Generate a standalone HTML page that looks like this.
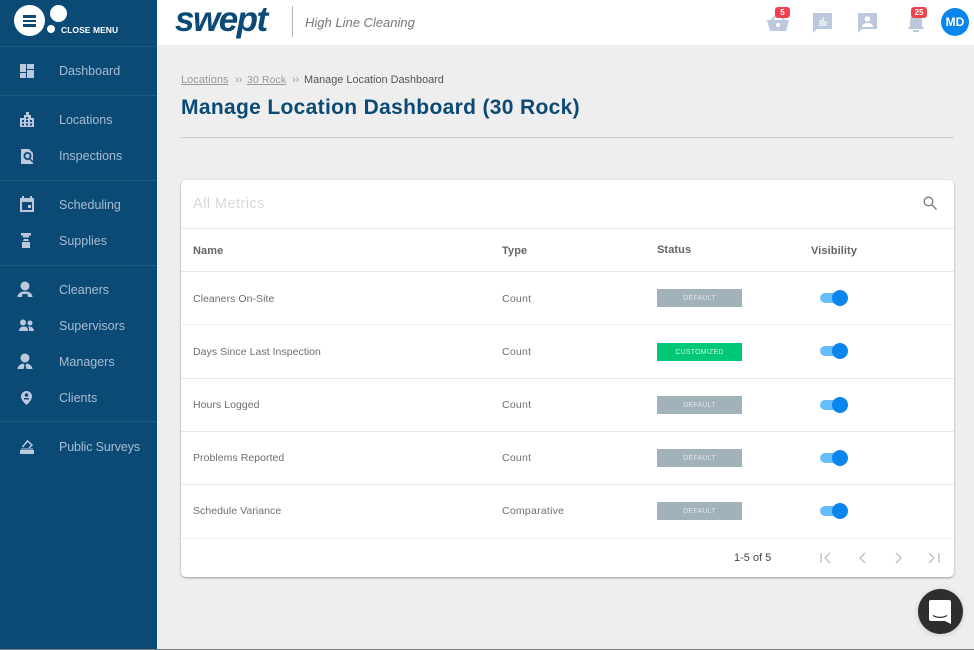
<!DOCTYPE html>
<html><head><meta charset="utf-8"><style>
html,body{margin:0;padding:0;width:974px;height:650px;overflow:hidden;background:#eee;font-family:"Liberation Sans",sans-serif}
.t{position:absolute;white-space:nowrap;line-height:16px}
.box{position:absolute}
.nav{color:#a9bdd2;font-size:12.5px;left:59px;letter-spacing:0}
.hr{position:absolute;left:0;width:157px;height:1px;background:#23597f}
.ln{position:absolute;left:181px;width:773px;height:1px;background:#e6e6e6}
.th{color:#666;font-size:11px;font-weight:bold;letter-spacing:.1px}
.td{color:#6e6e6e;font-size:10.5px;letter-spacing:.05px}
.ty{letter-spacing:.25px}
.tag{position:absolute;left:657px;width:85px;height:18px;background:#a2b2ba;color:#dfe5e8;font-size:7px;line-height:19.500px;text-align:center;letter-spacing:.2px}
.sw{position:absolute;left:820px;width:22px;height:10px;border-radius:5px;background:#66bdfb}
.kn{position:absolute;left:832px;width:16px;height:16px;border-radius:50%;background:#0a85ec}
svg{position:absolute;overflow:visible}
</style></head><body>
<div class="box" style="left:157px;top:0;width:817px;height:45px;background:#fff"></div>
<div class="box" style="left:0;top:0;width:157px;height:650px;background:#0a4a75"></div>
<div class="box" style="left:14px;top:5px;width:31px;height:31px;border-radius:50%;background:#fff"></div>
<div class="box" style="left:23px;top:15px;width:13px;height:3px;background:#0a4a75"></div>
<div class="box" style="left:23px;top:20px;width:13px;height:2px;background:#0a4a75"></div>
<div class="box" style="left:23px;top:24px;width:13px;height:3px;background:#0a4a75"></div>
<div class="box" style="left:50px;top:5px;width:17px;height:17px;border-radius:50%;background:#fff"></div>
<div class="box" style="left:47px;top:25px;width:8px;height:8px;border-radius:50%;background:#fff"></div>
<div class="t" style="left:61px;top:22px;color:#fff;font-size:8.500px;font-weight:bold;letter-spacing:.05px">CLOSE MENU</div>
<div class="hr" style="top:46px"></div><div class="hr" style="top:95px"></div><div class="hr" style="top:180px"></div><div class="hr" style="top:265px"></div><div class="hr" style="top:421px"></div>
<div class="t nav" style="top:63px">Dashboard</div>
<div class="t nav" style="top:112px">Locations</div>
<div class="t nav" style="top:148px">Inspections</div>
<div class="t nav" style="top:197px">Scheduling</div>
<div class="t nav" style="top:233px">Supplies</div>
<div class="t nav" style="top:282px">Cleaners</div>
<div class="t nav" style="top:318px">Supervisors</div>
<div class="t nav" style="top:354px">Managers</div>
<div class="t nav" style="top:390px">Clients</div>
<div class="t nav" style="top:439px;letter-spacing:-.12px">Public Surveys</div>
<svg width="157" height="470" style="left:0;top:0" fill="#bcc8dc">
<path d="M20 64h6v8h-6zM20 73h6v5h-6zM27 64h7v5h-7zM27 70h7v8h-7z"/>
<path d="M20 118h4v-3h2v-3h3v3h2v3h3v9H20z"/><path d="M22 120h2v2h-2zM26 120h2v2h-2zM30 120h2v2h-2zM22 123.500h2v2h-2zM26 123.500h2v2h-2zM30 123.500h2v2h-2zM26 117h2v2h-2z" fill="#0a4a75"/>
<path d="M21 149h8l4 4v11H21z"/><circle cx="27.500" cy="156" r="4" fill="#0a4a75"/><circle cx="27.500" cy="156" r="2.200"/><path d="M30 159l3 3" stroke="#0a4a75" stroke-width="1.500"/>
<path d="M20 198h14v14H20zM22 202v8h10v-8z" fill-rule="evenodd"/><rect x="22" y="196" width="2" height="3"/><rect x="30" y="196" width="2" height="3"/><rect x="28" y="205" width="3" height="3"/>
<path d="M21 233h10v2.500h-2v2h-6v-2h-2zM24 239h4l1 2h-6zM22 242h8v6h-8z"/>
<circle cx="25" cy="286" r="4.500"/><path d="M17.500 297c0-3 2.500-5 6-5.500v2.500h-1l-.5 3zM26.500 291.500c3.500.5 6 2.500 6 5.500h-4.500l-.5-3h-1z"/><rect x="23" y="291.500" width="4" height="2.500"/>
<circle cx="23" cy="322.500" r="3"/><circle cx="30" cy="323" r="2.500"/><path d="M19 331c0-3 2-4.500 5-4.500s4 1.500 4 4.500zM29 331c0-3 0-4-1-4.500 3-.5 6 1.500 6 4.500z"/>
<circle cx="25" cy="358" r="4.500"/><path d="M17.500 369c0-3 3-5 6-5.500l1 2-1 3.500zM32.500 369c0-3-3-5-6-5.500l-1 2 1 3.500z"/>
<path d="M26.500 391a5.500 5.500 0 0 1 5.500 5.500c0 4-5.500 8.500-5.500 8.500S21 400.500 21 396.500a5.500 5.500 0 0 1 5.500-5.500z"/><circle cx="26.500" cy="395" r="1.800" fill="#0a4a75"/><rect x="24" y="398" width="5" height="1.500" fill="#0a4a75"/>
<path d="M20 450h14v4H20z"/><path d="M22.500 447l5-6 4.500 4-3 3" fill="none" stroke="#bcc8dc" stroke-width="1.500"/><path d="M21 449h12" stroke="#bcc8dc"/>
</svg>
<div class="t" style="left:175px;top:1px;line-height:38px;font-size:35px;font-weight:bold;font-style:italic;color:#0a4a75;letter-spacing:-1.500px">swept</div>
<div class="box" style="left:292px;top:6px;width:1px;height:31px;background:#b5b5b5"></div>
<div class="t" style="left:305px;top:15px;font-size:13px;font-style:italic;color:#777;letter-spacing:0">High Line Cleaning</div>
<svg width="220" height="45" style="left:754px;top:0" fill="#bcc8dc">
<path d="M13 20h22l-3 11H16z"/><path d="M18 20l6-7 6 7" fill="none" stroke="#bcc8dc" stroke-width="2"/><circle cx="24" cy="25" r="2" fill="#fff"/>
<path d="M59 13h19v16H63l-4 4z"/><path d="M65 26v-6h3v-3h2v4h3v5z" fill="#e2e7ef"/>
<path d="M104 13h19v16h-15l-4 4z"/><circle cx="113.500" cy="19" r="2.800" fill="#fff"/><path d="M108 27c0-3 3-4 5.500-4s5.500 1 5.500 4z" fill="#fff"/>
<path d="M162 14c4 0 6 3 6 7v5l2 3h-16l2-3v-5c0-4 2-7 6-7z"/><rect x="159" y="30" width="6" height="2"/>
</svg>
<div class="box" style="left:775px;top:7px;width:15px;height:11px;border-radius:3px;background:#f0414f;color:#fff;font-size:8px;font-weight:bold;line-height:11px;text-align:center">5</div>
<div class="box" style="left:911px;top:7px;width:16px;height:11px;border-radius:3px;background:#f0414f;color:#fff;font-size:8px;font-weight:bold;line-height:11px;text-align:center">25</div>
<div class="box" style="left:941px;top:8px;width:28px;height:28px;border-radius:50%;background:#0a85ec;color:#fff;font-size:12px;font-weight:bold;line-height:28px;text-align:center">MD</div>
<div class="t" style="left:181px;top:72px;font-size:11px;color:#999;letter-spacing:.05px;text-decoration:underline">Locations</div>
<div class="t" style="left:235px;top:72px;font-size:11px;color:#999">››</div>
<div class="t" style="left:247px;top:72px;font-size:10.500px;color:#999;letter-spacing:.1px;text-decoration:underline">30 Rock</div>
<div class="t" style="left:292px;top:72px;font-size:11px;color:#999">››</div>
<div class="t" style="left:304px;top:72px;font-size:10.900px;color:#555;letter-spacing:0">Manage Location Dashboard</div>
<div class="t" style="left:181px;top:96px;line-height:24px;font-size:21px;font-weight:bold;color:#0a4a75;letter-spacing:.33px">Manage Location Dashboard (30 Rock)</div>
<div class="box" style="left:181px;top:137px;width:773px;height:1px;background:#d0d0d0"></div>
<div class="box" style="left:181px;top:180px;width:773px;height:397px;background:#fff;border-radius:5px;box-shadow:0 1px 2px rgba(0,0,0,.35)"></div>
<div class="t" style="left:193px;top:196px;font-size:14.500px;color:#d8d8d8;letter-spacing:.45px">All Metrics</div>
<svg width="16" height="16" style="left:922px;top:195px" fill="none" stroke="#777" stroke-width="1.300"><circle cx="6.500" cy="6.500" r="4.300"/><path d="M10 10l4.500 4.500"/></svg>
<div class="ln" style="top:228px"></div><div class="ln" style="top:271px"></div><div class="ln" style="top:324px;background:#efefef"></div><div class="ln" style="top:378px"></div><div class="ln" style="top:431px"></div><div class="ln" style="top:484px"></div><div class="ln" style="top:538px;background:#efefef"></div>
<div class="t th" style="left:193px;top:243px">Name</div>
<div class="t th" style="left:502px;top:243px">Type</div>
<div class="t th" style="left:657px;top:242px">Status</div>
<div class="t th" style="left:811px;top:243px">Visibility</div>
<div class="t td" style="left:193px;top:291px">Cleaners On-Site</div><div class="t td ty" style="left:502px;top:291px">Count</div>
<div class="t td" style="left:193px;top:344px">Days Since Last Inspection</div><div class="t td ty" style="left:502px;top:344px">Count</div>
<div class="t td" style="left:193px;top:397px">Hours Logged</div><div class="t td ty" style="left:502px;top:397px">Count</div>
<div class="t td" style="left:193px;top:450px">Problems Reported</div><div class="t td ty" style="left:502px;top:450px">Count</div>
<div class="t td" style="left:193px;top:503px">Schedule Variance</div><div class="t td ty" style="left:502px;top:503px">Comparative</div>
<div class="tag" style="top:289px">DEFAULT</div>
<div class="tag" style="top:343px;background:#00c875;color:#c8f5e2">CUSTOMIZED</div>
<div class="tag" style="top:396px">DEFAULT</div>
<div class="tag" style="top:449px">DEFAULT</div>
<div class="tag" style="top:502px">DEFAULT</div>
<div class="sw" style="top:293px"></div><div class="kn" style="top:290px"></div>
<div class="sw" style="top:346px"></div><div class="kn" style="top:343px"></div>
<div class="sw" style="top:400px"></div><div class="kn" style="top:397px"></div>
<div class="sw" style="top:453px"></div><div class="kn" style="top:450px"></div>
<div class="sw" style="top:506px"></div><div class="kn" style="top:503px"></div>
<div class="t" style="left:734px;top:550px;font-size:11px;color:#444;letter-spacing:0">1-5 of 5</div>
<svg width="130" height="14" style="left:815px;top:551px" fill="none" stroke="#bdbdbd" stroke-width="1.300"><path d="M6 2v10M15 2l-5 5 5 5M50 2l-5 5 5 5M81 2l5 5-5 5M114 2l5 5-5 5M124 2v10"/></svg>
<div class="box" style="left:918px;top:589px;width:45px;height:45px;border-radius:50%;background:#2e2e2e;box-shadow:0 1px 6px rgba(0,0,0,.15)"></div>
<svg width="22" height="25" style="left:929px;top:600px"><path d="M2 0h18a2 2 0 0 1 2 2v22l-6-3H2a2 2 0 0 1-2-2V2a2 2 0 0 1 2-2z" fill="#fff"/><path d="M4 15.500c4 2.500 10 2.500 14 0" stroke="#2e2e2e" stroke-width="1.200" fill="none"/></svg>
<div class="box" style="left:0;top:649px;width:974px;height:1px;background:#777"></div>
</body></html>
